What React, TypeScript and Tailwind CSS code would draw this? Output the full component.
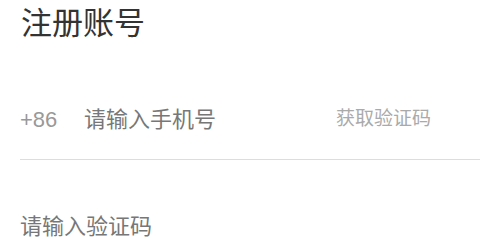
import React from "react"

const font = { fontFamily: '"Liberation Sans", "Noto Sans CJK SC", sans-serif' }

export default function App() {
  return (
    <div className="h-[248px] w-[480px] overflow-hidden bg-white" style={font}>
      <div className="pl-5">
        <div className="h-[80px] pt-[4px] pl-px">
          <h1 className="text-[31px] leading-[40px] text-[#333333]">注册账号</h1>
        </div>

        {/* phone */}
        <div className="flex h-[80px] items-center border-b border-[#dddddd]">
          <span className="w-[64px] text-[22px] text-[#999999]">+86</span>
          <input
            className="min-w-0 flex-1 bg-transparent text-[22px] text-[#333333] outline-none placeholder:text-[#777777]"
            placeholder="请输入手机号"
          />
          <button className="pr-[49px] text-[19px] text-[#aaaaaa]">获取验证码</button>
        </div>

        {/* code */}
        <div className="mt-[26px] flex h-[80px] items-center">
          <input
            className="min-w-0 flex-1 bg-transparent text-[22px] text-[#333333] outline-none placeholder:text-[#777777]"
            placeholder="请输入验证码"
          />
        </div>
      </div>
    </div>
  )
}
